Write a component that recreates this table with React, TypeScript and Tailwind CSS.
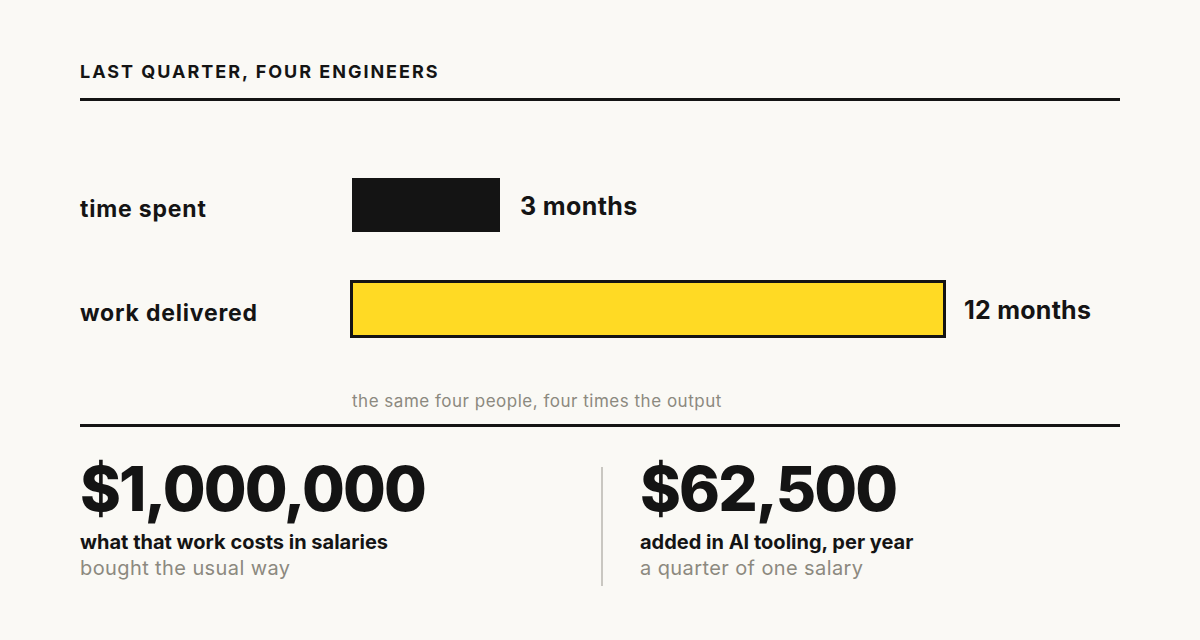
export default function App() {
  const font = { fontFamily: 'Inter, "Noto Sans", sans-serif' };
  return (
    <div className="w-[1200px] h-[640px] bg-[#faf9f5] text-[#141414] overflow-hidden" style={font}>
      <div className="px-[80px] pt-[58px]">
        <div className="h-[27px] flex items-center text-[18px] font-bold tracking-[0.11em] leading-none">
          LAST QUARTER, FOUR ENGINEERS
        </div>
        <div className="mt-[13px] h-[3px] bg-[#141414]" />

        <div className="mt-[77px] flex items-center h-[54px]">
          <div className="w-[272px] text-[23px] font-bold tracking-[0.035em] pt-[8px]">time spent</div>
          <div className="w-[148px] h-[54px] bg-[#141414]" />
          <div className="ml-[20px] text-[25px] font-bold tracking-[0.015em] pt-[4px]">3 months</div>
        </div>

        <div className="mt-[48px] flex items-center h-[58px]">
          <div className="w-[270px] text-[23px] font-bold tracking-[0.035em] pt-[8px]">work delivered</div>
          <div className="w-[596px] h-[58px] bg-[#ffda24] border-[3px] border-[#141414]" />
          <div className="ml-[18px] text-[25px] font-bold tracking-[0.01em] pt-[4px]">12 months</div>
        </div>

        <div className="mt-[52px] pl-[272px] h-[24px] flex items-center text-[17px] text-[#8c897f] tracking-[0.03em]">
          the same four people, four times the output
        </div>
        <div className="mt-[10px] h-[3px] bg-[#141414]" />

        <div className="mt-[40px] flex">
          <div className="w-[521px] -mt-[9px]">
            <div className="text-[62px] font-extrabold leading-none tracking-[-0.03em]">$1,000,000</div>
            <div className="mt-[9px] text-[20px] font-bold leading-[26px]">what that work costs in salaries</div>
            <div className="text-[20px] text-[#8c897f] leading-[26px] tracking-[0.02em]">bought the usual way</div>
          </div>
          <div className="w-[2px] h-[119px] bg-[#c9c7c1]" />
          <div className="pl-[37px] -mt-[9px]">
            <div className="text-[62px] font-extrabold leading-none tracking-[-0.03em]">$62,500</div>
            <div className="mt-[9px] text-[20px] font-bold leading-[26px]">added in AI tooling, per year</div>
            <div className="text-[20px] text-[#8c897f] leading-[26px] tracking-[0.02em]">a quarter of one salary</div>
          </div>
        </div>
      </div>
    </div>
  );
}
